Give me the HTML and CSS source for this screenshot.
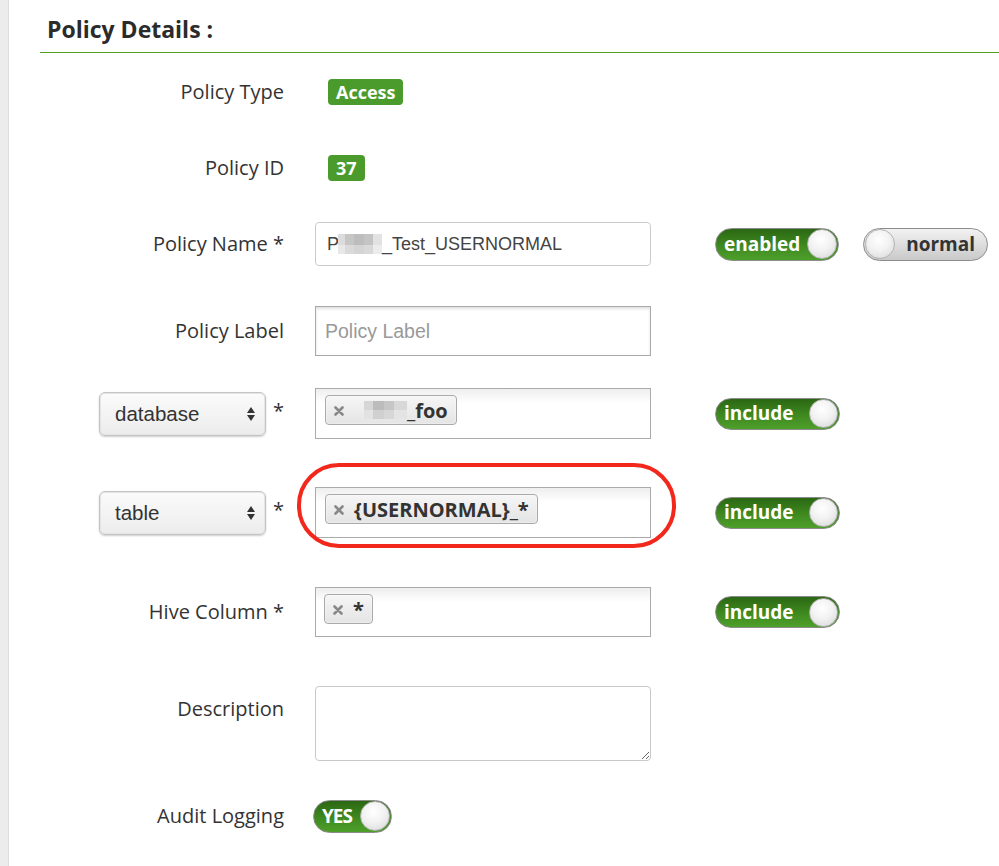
FILE: index.html
```html
<!DOCTYPE html>
<html lang="en">
<head>
<meta charset="utf-8">
<title>Policy Details</title>
<link rel="stylesheet" href="styles.css">
</head>
<body>
<div class="page">
  <h2 class="section-title">Policy Details :</h2>
  <div class="form">
    <div class="row r-type">
      <div class="label">Policy Type</div>
      <div class="control"><span class="badge">Access</span></div>
    </div>
    <div class="row r-id">
      <div class="label">Policy ID</div>
      <div class="control"><span class="badge">37</span></div>
    </div>
    <div class="row r-name">
      <div class="label">Policy Name *</div>
      <div class="control">
        <div class="text-input"><span>P</span><span class="mosaic m-name"></span><span>_Test_USERNORMAL</span></div>
      </div>
      <div class="extras">
        <div class="toggle on w-enabled"><span class="toggle-text">enabled</span><span class="knob"></span></div>
        <div class="toggle off w-normal"><span class="knob"></span><span class="toggle-text">normal</span></div>
      </div>
    </div>
    <div class="row r-label">
      <div class="label">Policy Label</div>
      <div class="control">
        <div class="plain-input"><span class="placeholder">Policy Label</span></div>
      </div>
    </div>
    <div class="row r-db">
      <div class="label">
        <div class="select"><span>database</span><svg class="arrows" width="10" height="16" viewBox="0 0 10 16"><path d="M5 1 L9 7 H1 Z M5 15 L9 9 H1 Z" fill="#333"/></svg></div>
        <span class="req">*</span>
      </div>
      <div class="control">
        <div class="tag-input"><span class="tag"><svg class="tag-x" width="10" height="10" viewBox="0 0 10 10"><path d="M1.5 1.5 L8.5 8.5 M8.5 1.5 L1.5 8.5" stroke="#888" stroke-width="2.6" stroke-linecap="round"/></svg><span class="mosaic m-tag"></span>_foo</span></div>
      </div>
      <div class="extras">
        <div class="toggle on w-include"><span class="toggle-text">include</span><span class="knob"></span></div>
      </div>
    </div>
    <div class="row r-table">
      <div class="label">
        <div class="select"><span>table</span><svg class="arrows" width="10" height="16" viewBox="0 0 10 16"><path d="M5 1 L9 7 H1 Z M5 15 L9 9 H1 Z" fill="#333"/></svg></div>
        <span class="req">*</span>
      </div>
      <div class="control">
        <div class="tag-input"><span class="tag"><svg class="tag-x" width="10" height="10" viewBox="0 0 10 10"><path d="M1.5 1.5 L8.5 8.5 M8.5 1.5 L1.5 8.5" stroke="#888" stroke-width="2.6" stroke-linecap="round"/></svg>{USERNORMAL}_*</span></div>
      </div>
      <div class="extras">
        <div class="toggle on w-include"><span class="toggle-text">include</span><span class="knob"></span></div>
      </div>
      <div class="highlight"></div>
    </div>
    <div class="row r-hive">
      <div class="label">Hive Column *</div>
      <div class="control">
        <div class="tag-input"><span class="tag"><svg class="tag-x" width="10" height="10" viewBox="0 0 10 10"><path d="M1.5 1.5 L8.5 8.5 M8.5 1.5 L1.5 8.5" stroke="#888" stroke-width="2.6" stroke-linecap="round"/></svg>*</span></div>
      </div>
      <div class="extras">
        <div class="toggle on w-include"><span class="toggle-text">include</span><span class="knob"></span></div>
      </div>
    </div>
    <div class="row r-desc">
      <div class="label">Description</div>
      <div class="control"><textarea class="textarea"></textarea></div>
    </div>
    <div class="row r-audit">
      <div class="label">Audit Logging</div>
      <div class="control">
        <div class="toggle on w-yes"><span class="toggle-text">YES</span><span class="knob"></span></div>
      </div>
    </div>
  </div>
</div>
</body>
</html>
```

FILE: styles.css
```css
html, body {
  margin: 0;
  padding: 0;
}
body {
  background: #ffffff;
  border-left: 8px solid #ececec;
  font-family: "Open Sans", "DejaVu Sans", sans-serif;
  color: #333333;
  min-height: 866px;
  box-sizing: border-box;
}
.page {
  border-left: 1px solid #dcdcdc;
  min-height: 866px;
  padding-left: 31px;
  overflow: hidden;
}
.section-title {
  margin: 0;
  padding: 14px 0 8px 7px;
  font-size: 23px;
  line-height: 30px;
  font-weight: 700;
  color: #2b2b2b;
  border-bottom: 1px solid #4f9f1f;
}
.form {
  display: flex;
  flex-direction: column;
}
.row {
  position: relative;
  display: grid;
  grid-template-columns: 244px 336px 1fr;
  column-gap: 31px;
  align-items: center;
}
.r-type { margin-top: 19px; height: 40px; }
.r-id { margin-top: 36px; height: 40px; }
.r-name { margin-top: 34px; height: 44px; }
.r-label { margin-top: 40px; height: 50px; }
.r-db { margin-top: 32px; height: 51px; }
.r-table { margin-top: 48px; height: 51px; }
.r-hive { margin-top: 49px; height: 50px; }
.r-desc { margin-top: 49px; height: 75px; align-items: start; }
.r-audit { margin-top: 35px; height: 40px; }

.label {
  font-size: 20px;
  line-height: 26px;
  color: #333333;
  text-align: right;
  display: flex;
  justify-content: flex-end;
  align-items: center;
}
.r-desc .label { padding-top: 10px; }
.req {
  margin-left: 7px;
  margin-top: -6px;
}
.control {
  display: flex;
  align-items: center;
}
.badge {
  margin-left: 13px;
  display: inline-block;
  background: #4a9b2c;
  color: #ffffff;
  font-weight: 700;
  font-size: 18px;
  line-height: 26px;
  padding: 0 8px;
  border-radius: 4px;
}
.text-input {
  box-sizing: border-box;
  width: 336px;
  height: 44px;
  border: 1px solid #cccccc;
  border-radius: 4px;
  padding: 0 11px;
  display: flex;
  align-items: center;
  font-family: "Liberation Sans", Arial, sans-serif;
  font-size: 18px;
  color: #444444;
}
.mosaic {
  display: inline-block;
  vertical-align: middle;
}
.m-name {
  width: 44px;
  height: 20px;
  margin-left: -1px;
  background:
    linear-gradient(180deg, rgba(255,255,255,0) 0 55%, rgba(255,255,255,0.35) 55% 100%),
    linear-gradient(90deg, #dcdcdc 0 16%, #c6c6c6 16% 36%, #bdbdbd 36% 58%, #c4c4c4 58% 80%, #e2e2e2 80%);
}
.m-tag {
  width: 43px;
  height: 18px;
  margin-left: 10px;
  background:
    linear-gradient(180deg, rgba(255,255,255,0) 0 50%, rgba(255,255,255,0.3) 50% 100%),
    linear-gradient(90deg, #d6d6d6 0 22%, #bcbcbc 22% 46%, #c6c6c6 46% 70%, #d8d8d8 70% 100%);
}
.plain-input {
  box-sizing: border-box;
  width: 336px;
  height: 50px;
  border: 1px solid #a9a9a9;
  box-shadow: inset 0 2px 3px rgba(0, 0, 0, 0.12);
  padding: 0 9px;
  display: flex;
  align-items: center;
}
.placeholder {
  font-family: "Liberation Sans", Arial, sans-serif;
  font-size: 19.5px;
  color: #999999;
}
.select {
  box-sizing: border-box;
  width: 167px;
  height: 44px;
  border: 1px solid #c4c4c4;
  border-radius: 6px;
  background: linear-gradient(#fbfbfb, #ececec);
  box-shadow: 0 1px 2px rgba(0, 0, 0, 0.2), inset 0 0 0 1px #e4e4e4;
  display: flex;
  align-items: center;
  justify-content: space-between;
  padding: 0 9px 0 15px;
  font-family: "Liberation Sans", Arial, sans-serif;
  font-size: 20.5px;
  color: #333333;
}
.arrows { display: block; }
.tag-input {
  box-sizing: border-box;
  width: 336px;
  height: 51px;
  border: 1px solid #aaaaaa;
  background: linear-gradient(#eeeeee 0, #ffffff 14px);
  padding: 6px 9px;
  display: flex;
  align-items: flex-start;
}
.r-hive .tag-input { height: 50px; padding-left: 8px; }
.tag {
  box-sizing: border-box;
  height: 30px;
  display: inline-flex;
  align-items: center;
  border: 1px solid #aaaaaa;
  border-radius: 4px;
  background: linear-gradient(#f6f6f6, #e4e4e4);
  box-shadow: inset 0 0 2px #ffffff;
  padding: 0 8px 0 8px;
  font-weight: 700;
  font-size: 20px;
  color: #333333;
}
.tag-x {
  display: block;
  flex: none;
  margin-right: 10px;
  margin-top: 1px;
}
.textarea {
  display: block;
  box-sizing: border-box;
  width: 336px;
  height: 75px;
  border: 1px solid #c9c9c9;
  border-radius: 4px;
  resize: both;
  margin: 0;
  font-family: "Liberation Sans", Arial, sans-serif;
}
.extras {
  padding-left: 33px;
  display: flex;
  gap: 24px;
  align-items: center;
}
.toggle {
  box-sizing: border-box;
  height: 33px;
  border-radius: 17px;
  border: 1px solid #8c8c8c;
  display: inline-flex;
  align-items: center;
  justify-content: space-between;
  font-weight: 700;
  font-size: 19px;
}
.toggle.on {
  background: linear-gradient(#2b6713, #3f8a20 55%, #4e9f2b);
  color: #ffffff;
  padding: 0 1px 0 8px;
}
.toggle.off {
  background: linear-gradient(#f2f2f2, #c9c9c9);
  color: #333333;
  padding: 0 12px 0 1px;
}
.w-enabled { width: 124px; }
.w-normal { width: 125px; }
.w-include { width: 125px; height: 32px; padding-left: 12px; }
.w-yes { width: 79px; margin-left: -2px; padding-left: 5px; }
.toggle-text {
  line-height: 1;
  letter-spacing: 0;
}
.w-yes .toggle-text { letter-spacing: -1px; }
.knob {
  box-sizing: border-box;
  width: 30px;
  height: 30px;
  border-radius: 50%;
  border: 1px solid #b3b3b3;
  background: radial-gradient(circle at 45% 35%, #ffffff 0, #f2f2f2 45%, #d4d4d4 100%);
}
.w-include .knob { width: 29px; height: 29px; }
.highlight {
  position: absolute;
  left: 257px;
  top: -24px;
  width: 379px;
  height: 85px;
  box-sizing: border-box;
  border: 4px solid #f2281d;
  border-radius: 42px;
  pointer-events: none;
}
```
